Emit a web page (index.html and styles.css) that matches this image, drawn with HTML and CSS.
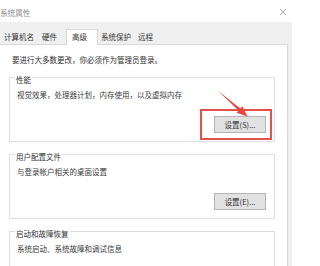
FILE: index.html
```html
<!DOCTYPE html>
<html lang="zh-CN">
<head>
<meta charset="utf-8">
<title>系统属性</title>
<link rel="stylesheet" href="styles.css">
</head>
<body>
<div class="titlebar">
  <span class="title">系统属性</span>
  <svg class="close" width="8" height="8" viewBox="0 0 8 8"><path d="M1 1L7 7M7 1L1 7" stroke="#9a9a9a" stroke-width="0.8" fill="none"/></svg>
</div>
<div class="window">
  <div class="tabs">
    <div class="tab t1">计算机名</div>
    <div class="tab t2">硬件</div>
    <div class="tab active">高级</div>
    <div class="tab t4">系统保护</div>
    <div class="tab t5">远程</div>
  </div>
  <div class="panel">
    <div class="intro">要进行大多数更改，你必须作为管理员登录。</div>
    <div class="group">
      <div class="glabel">性能</div>
      <div class="gtext">视觉效果，处理器计划，内存使用，以及虚拟内存</div>
      <div class="brow"><div class="btn">设置(S)...</div></div>
      <div class="highlight"></div>
    </div>
    <div class="group">
      <div class="glabel">用户配置文件</div>
      <div class="gtext">与登录帐户相关的桌面设置</div>
      <div class="brow"><div class="btn">设置(E)...</div></div>
    </div>
    <div class="group last">
      <div class="glabel">启动和故障恢复</div>
      <div class="gtext">系统启动、系统故障和调试信息</div>
    </div>
  </div>
</div>
<svg class="arrow" width="304" height="266" viewBox="0 0 304 266">
  <polygon points="217.6,90.6 240.3,108.4 242.3,106.2 247.5,116.6 236.5,112.8 238.5,110.6" fill="#e8453c"/>
</svg>
</body>
</html>
```
FILE: styles.css
```css
html, body {
  margin: 0;
  padding: 0;
}
body {
  width: 304px;
  height: 266px;
  overflow: hidden;
  background: #ffffff;
  font-family: "Noto Sans CJK SC", "Noto Sans", sans-serif;
  font-size: 7.5px;
  color: #333333;
  position: relative;
}
.titlebar {
  height: 22px;
  display: flex;
  align-items: center;
  justify-content: space-between;
  padding: 0 17px 0 0;
  box-sizing: border-box;
}
.title {
  color: #8c8c8c;
  font-size: 7.6px;
  line-height: 10px;
  margin-top: 4px;
}
.close {
  display: block;
  margin-top: 2px;
}
.window {
  width: 292px;
  height: 244px;
  background: #f0f0f0;
  padding-top: 6px;
  box-sizing: border-box;
  overflow: hidden;
}
.tabs {
  display: flex;
  align-items: flex-end;
  height: 16px;
}
.tab {
  height: 15px;
  line-height: 15px;
  padding: 0 4px;
  white-space: nowrap;
}
.t2 {
  margin-right: 5px;
}
.tab.active {
  height: 16px;
  line-height: 14px;
  padding: 0 10px 0 5px;
  background: #ffffff;
  border: 1px solid #d9d9d9;
  border-bottom: none;
  box-sizing: border-box;
  margin-bottom: -1px;
  position: relative;
  z-index: 1;
}
.t4 {
  padding: 0 4px 0 3px;
}
.t5 {
  padding: 0 4px 0 3px;
}
.panel {
  width: 288px;
  height: 222px;
  background: #ffffff;
  border-top: 1px solid #d9d9d9;
  border-right: 1px solid #d9d9d9;
  box-sizing: border-box;
  padding-top: 10px;
  overflow: hidden;
}
.intro {
  line-height: 10px;
  padding-left: 12px;
  color: #2e2e2e;
  margin-bottom: 12px;
}
.group {
  position: relative;
  margin: 0 0 12px 9px;
  width: 266px;
  border: 1px solid #dedede;
  box-sizing: border-box;
  padding: 0 8px 8px 7px;
}
.group.last {
  height: 40px;
  margin-bottom: 0;
}
.glabel {
  display: table;
  margin: -3px 0 0 -2px;
  padding: 0 1px;
  line-height: 10px;
  background: #ffffff;
}
.gtext {
  line-height: 10px;
  margin-top: 5px;
  color: #3a3a3a;
}
.brow {
  display: flex;
  justify-content: flex-end;
  margin-top: 16px;
}
.btn {
  width: 52px;
  height: 17px;
  box-sizing: border-box;
  background: #e1e1e1;
  border: 1px solid #b4b4b4;
  line-height: 15px;
  text-align: center;
  color: #333333;
}
.highlight {
  position: absolute;
  left: 190px;
  top: 31px;
  width: 72px;
  height: 31px;
  box-sizing: border-box;
  border: 2px solid #e4524c;
}
.arrow {
  position: absolute;
  left: 0;
  top: 0;
  pointer-events: none;
}
```
